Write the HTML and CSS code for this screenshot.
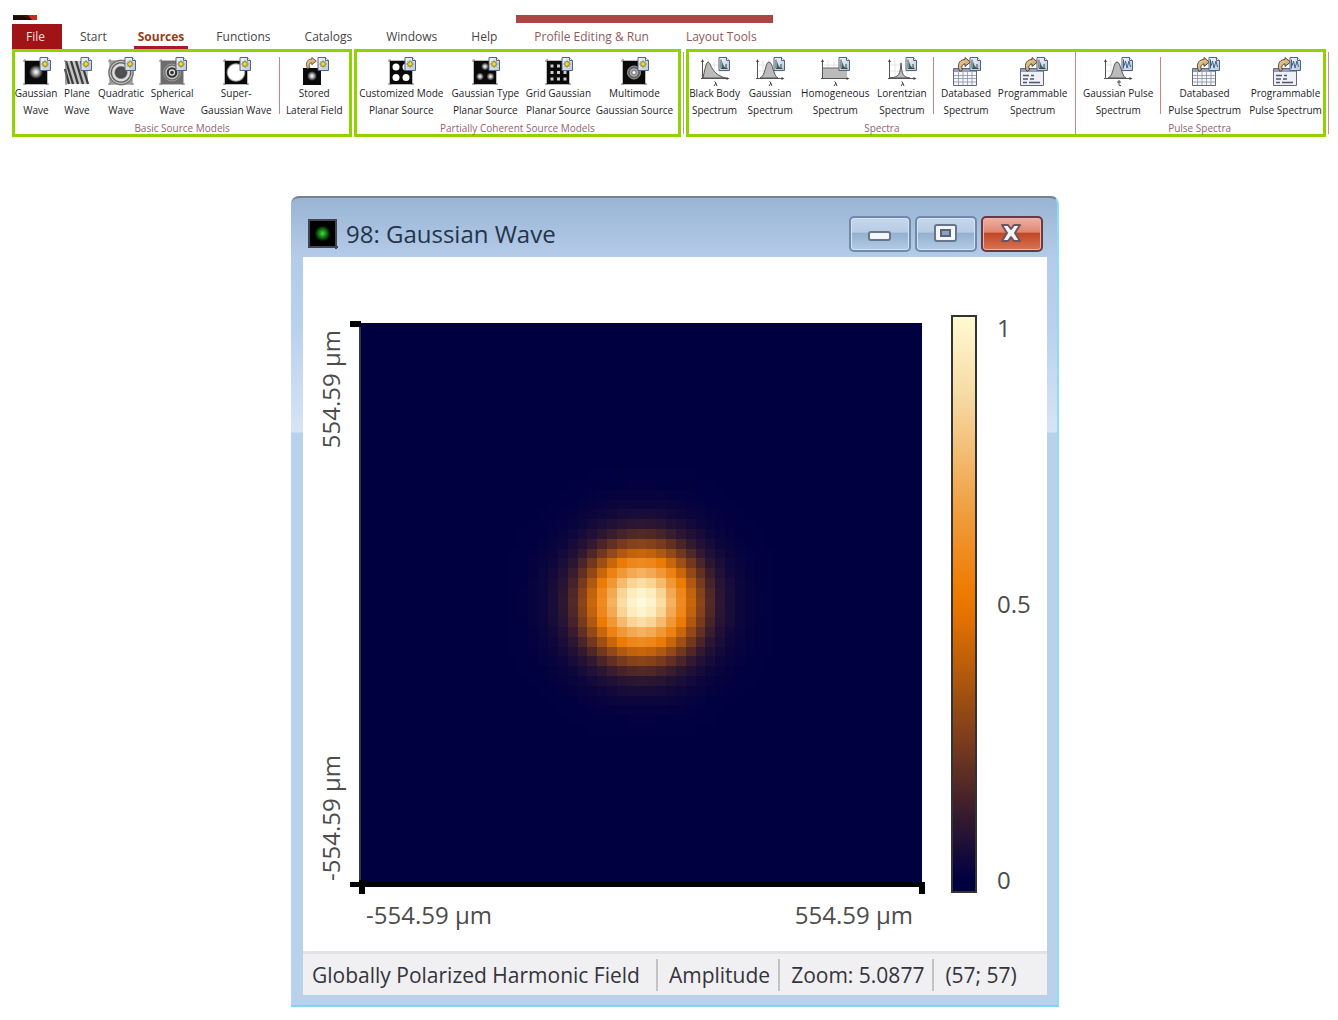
FILE: index.html
```html
<!DOCTYPE html>
<html lang="en">
<head>
<meta charset="utf-8">
<title>Gaussian Wave</title>
<link rel="stylesheet" href="styles.css">
</head>
<body>
<svg class="defs" aria-hidden="true">
  <defs>
    <radialGradient id="glow"><stop offset="0" stop-color="#fff"/><stop offset=".35" stop-color="#bbb"/><stop offset="1" stop-color="#0a0a0a"/></radialGradient>
    <radialGradient id="soft"><stop offset="0" stop-color="#fff"/><stop offset=".8" stop-color="#fff"/><stop offset="1" stop-color="#555"/></radialGradient>
    <radialGradient id="green"><stop offset="0" stop-color="#3be03b"/><stop offset=".35" stop-color="#1d981d"/><stop offset="1" stop-color="#000"/></radialGradient>
    <radialGradient id="rings"><stop offset="0" stop-color="#555"/><stop offset=".42" stop-color="#4a4a4a"/><stop offset=".54" stop-color="#ddd"/><stop offset=".64" stop-color="#ddd"/><stop offset=".74" stop-color="#555"/><stop offset=".84" stop-color="#ccc"/><stop offset=".92" stop-color="#666"/><stop offset="1" stop-color="#999"/></radialGradient>
    <linearGradient id="doc" x2="1" y2="1"><stop offset="0" stop-color="#f4f8fd"/><stop offset="1" stop-color="#b5c6de"/></linearGradient>
    <linearGradient id="gold" x2="1" y2="1"><stop offset="0" stop-color="#f0d8a8"/><stop offset="1" stop-color="#b98e52"/></linearGradient>
  </defs>
  <symbol id="page" viewBox="0 0 12 14"><path d="M1 .5h7.500l3 3v10H1z" fill="url(#doc)" stroke="#52637c"/><path d="M8.500.5v3h3" fill="#fff" stroke="#52637c"/></symbol>
  <symbol id="star" viewBox="0 0 12 14"><use href="#page"/><path d="M6 3.500v7M2.500 7h7M3.600 4.600l4.800 4.800M8.400 4.600L3.600 9.400" stroke="#6f6a30" stroke-width="1.200"/><circle cx="6" cy="7" r="2.200" fill="#f4dc2c" stroke="#8b7b22" stroke-width=".6"/></symbol>
  <symbol id="bars" viewBox="0 0 12 14"><use href="#page"/><path d="M3 2.500v9h6.500" fill="none" stroke="#444"/><path d="M4 11V4.500l1.500 4L7.500 11z" fill="#2f6d60"/><path d="M8 7v4" stroke="#444"/></symbol>
  <symbol id="pulse" viewBox="0 0 12 14"><use href="#page"/><path d="M2.500 2.500v9M3 9l1.500-5L6 11l2-7 1.500 6" fill="none" stroke="#3f6189"/></symbol>
  <symbol id="frame" viewBox="0 0 30 30"><path d="M2 4h26M4 2v26M26 4v24M2 27h26" stroke="#777" stroke-width="1"/></symbol>
  <symbol id="arrow" viewBox="0 0 14 16"><path d="M3 14.500C0 10 1 2.500 8 2.500V.5l5.500 4.500L8 9.500V7C5 7 4 10 5.500 13z" fill="url(#gold)" stroke="#4b3826" stroke-width=".9"/></symbol>
  <symbol id="i-gauss" viewBox="0 0 30 30"><use href="#frame"/><path d="M4 4h22v23H4z" fill="#0a0a0a"/><circle cx="15" cy="15" r="7" fill="url(#glow)"/><use href="#star" x="18" width="12" height="14"/></symbol>
  <symbol id="i-plane" viewBox="0 0 30 30"><path d="M3 4h23v23H3z" fill="#c4c4c4"/><path d="M3 12l4 15M4 4l7 23M9 4l7 23M14 4l7 23M19 4l7 23" stroke="#3c3c3c" stroke-width="2.300"/><path d="M2 4h2v24" fill="none" stroke="#777"/><use href="#star" x="18" width="12" height="14"/></symbol>
  <symbol id="i-quad" viewBox="0 0 30 30"><use href="#frame"/><path d="M4 4h22v23H4z" fill="#999"/><circle cx="15" cy="15.500" r="13" fill="url(#rings)"/><use href="#star" x="18" width="12" height="14"/></symbol>
  <symbol id="i-sphere" viewBox="0 0 30 30"><use href="#frame"/><path d="M4 4h22v23H4z" fill="#6d6d6d"/><g fill="none"><circle cx="15" cy="15.500" r="8.500" stroke="#999"/><circle cx="15" cy="15.500" r="6" fill="#333" stroke="#ccc" stroke-width="1.300"/><circle cx="15" cy="15.500" r="2.500" stroke="#ddd" stroke-width="1.300"/></g><use href="#star" x="18" width="12" height="14"/></symbol>
  <symbol id="i-super" viewBox="0 0 30 30"><use href="#frame"/><path d="M4 4h22v23H4z" fill="#0a0a0a"/><circle cx="15" cy="15.500" r="9.500" fill="url(#soft)"/><use href="#star" x="18" width="12" height="14"/></symbol>
  <symbol id="i-stored" viewBox="0 0 30 30"><path d="M4 11h18v17H4z" fill="#0a0a0a"/><circle cx="13" cy="19" r="5" fill="url(#glow)"/><use href="#arrow" x="5" width="14" height="13"/><use href="#star" x="18" width="12" height="14"/></symbol>
  <symbol id="i-custom" viewBox="0 0 30 30"><use href="#frame"/><path d="M4 4h22v23H4z" fill="#0a0a0a"/><g fill="#fff"><circle cx="10" cy="10" r="3.500"/><circle cx="20" cy="10" r="3.500"/><circle cx="10" cy="20.500" r="3.500"/><circle cx="20" cy="20.500" r="3.500"/></g><use href="#star" x="18" width="12" height="14"/></symbol>
  <symbol id="i-type" viewBox="0 0 30 30"><use href="#frame"/><path d="M4 4h22v23H4z" fill="#0a0a0a"/><g fill="url(#glow)"><circle cx="15" cy="9.500" r="4"/><circle cx="10" cy="19.500" r="4"/><circle cx="20.500" cy="19.500" r="4"/></g><use href="#star" x="18" width="12" height="14"/></symbol>
  <symbol id="i-grid" viewBox="0 0 30 30"><use href="#frame"/><path d="M4 4h22v23H4z" fill="#0a0a0a"/><path d="M7.500 9h16M7.500 15.500h16M7.500 22h16" stroke="#ccc" stroke-width="3" stroke-dasharray="3 3.500"/><use href="#star" x="18" width="12" height="14"/></symbol>
  <symbol id="i-multi" viewBox="0 0 30 30"><use href="#frame"/><path d="M4 4h22v23H4z" fill="#0a0a0a"/><circle cx="15" cy="15.500" r="6.500" fill="#666" stroke="#999"/><circle cx="15" cy="15.500" r="3.700" fill="#888" stroke="#bbb"/><circle cx="15" cy="15.500" r="1.500" fill="#fff"/><use href="#star" x="18" width="12" height="14"/></symbol>
  <symbol id="axes" viewBox="0 0 30 30"><path d="M2 8h26M2 14h26M8 3v18M14 3v18M20 3v18" stroke="#ddd" stroke-width=".8"/><path d="M2.500 4v18M1 21.500h26" stroke="#555"/><path d="M2.500 2L1 5h3zM29.500 21.500l-3-1.500v3z" fill="#444"/></symbol>
  <symbol id="lambda" viewBox="0 0 30 30"><path d="M14.500 24.500q1 0 1.500 2l1 2.500M16 26l-2 3" fill="none" stroke="#444"/></symbol>
  <symbol id="i-black" viewBox="0 0 30 30"><use href="#axes"/><path d="M3 21Q6 5 8 5c3 0 3 13 18 16z" fill="#bbb" stroke="#555"/><use href="#lambda"/><use href="#bars" x="18" width="12" height="14"/></symbol>
  <symbol id="i-bell" viewBox="0 0 30 30"><use href="#axes"/><path d="M5 21C11 19 10 5 14 5s4 14 9 16z" fill="#bbb" stroke="#555"/><use href="#lambda"/><use href="#bars" x="18" width="12" height="14"/></symbol>
  <symbol id="i-homo" viewBox="0 0 30 30"><use href="#axes"/><path d="M3 11h24v10H3z" fill="#bbb"/><path d="M3 11h24" stroke="#666"/><use href="#lambda"/><use href="#bars" x="18" width="12" height="14"/></symbol>
  <symbol id="i-lorentz" viewBox="0 0 30 30"><use href="#axes"/><path d="M3 21c9-1 10-3 11-15 1 12 2 14 9 15z" fill="#bbb" stroke="#555"/><use href="#lambda"/><use href="#bars" x="18" width="12" height="14"/></symbol>
  <symbol id="table" viewBox="0 0 30 30"><path d="M2.500 11.500h23v17h-23z" fill="#f5f7fb" stroke="#667"/><path d="M3 12h22v3H3z" fill="#8fa0c0"/><path d="M3 18.500h22M3 21.500h22M3 25h22M7.500 15v13M12 15v13M16.500 15v13M21 15v13" stroke="#8b90a0" stroke-width=".8"/><use href="#arrow" x="6" width="14" height="16"/></symbol>
  <symbol id="prog" viewBox="0 0 30 30"><path d="M2.500 11.500h23v17h-23z" fill="#eef1f7" stroke="#667"/><path d="M3 12h22v3H3z" fill="#8fa0c0"/><path d="M5 18.500h6M13 18.500h3M5 22h5M12 22h4M5 25.500h4M11 25.500h11" stroke="#556" stroke-width="1.300"/><use href="#arrow" x="6" width="14" height="16"/></symbol>
  <symbol id="i-data" viewBox="0 0 30 30"><use href="#table"/><use href="#bars" x="18" width="12" height="14"/></symbol>
  <symbol id="i-prog" viewBox="0 0 30 30"><use href="#prog"/><use href="#bars" x="18" width="12" height="14"/></symbol>
  <symbol id="i-pbell" viewBox="0 0 30 30"><use href="#axes"/><path d="M5 21C11 19 10 5 14 5s4 14 9 16z" fill="#bbb" stroke="#555"/><path d="M16 23v5q0 1 2 .5M14 25h4" fill="none" stroke="#444"/><use href="#pulse" x="18" width="12" height="14"/></symbol>
  <symbol id="i-pdata" viewBox="0 0 30 30"><use href="#table"/><use href="#pulse" x="18" width="12" height="14"/></symbol>
  <symbol id="i-pprog" viewBox="0 0 30 30"><use href="#prog"/><use href="#pulse" x="18" width="12" height="14"/></symbol>
</svg>

<header class="app">
  <div class="caption">
    <svg class="logo" viewBox="0 0 24 5" aria-hidden="true"><path d="M0 0h24v5H0z" fill="#4a0f08"/><path d="M0 1h10l8 4H0z" fill="#1d0d06"/><path d="M15 0h9v5h-5z" fill="#c92a1c"/></svg>
    <div class="context"></div>
  </div>
  <nav class="tabs">
    <a class="file" href="#file">File</a>
    <a href="#start">Start</a>
    <a class="active" href="#sources">Sources</a>
    <a href="#functions">Functions</a>
    <a href="#catalogs">Catalogs</a>
    <a href="#windows">Windows</a>
    <a href="#help">Help</a>
    <a class="tool" href="#profile">Profile Editing &amp; Run</a>
    <a class="tool" href="#layout">Layout Tools</a>
  </nav>
  <div class="ribbon">
    <div class="box first">
      <section class="group">
        <div class="tools basic">
          <button><svg><use href="#i-gauss"/></svg><span>Gaussian<br>Wave</span></button>
          <button><svg><use href="#i-plane"/></svg><span>Plane<br>Wave</span></button>
          <button><svg><use href="#i-quad"/></svg><span>Quadratic<br>Wave</span></button>
          <button><svg><use href="#i-sphere"/></svg><span>Spherical<br>Wave</span></button>
          <button><svg><use href="#i-super"/></svg><span>Super-<br>Gaussian Wave</span></button>
          <i class="rule"></i>
          <button><svg><use href="#i-stored"/></svg><span>Stored<br>Lateral Field</span></button>
        </div>
        <h2>Basic Source Models</h2>
      </section>
    </div>
    <div class="box second">
      <section class="group">
        <div class="tools coherent">
          <button><svg><use href="#i-custom"/></svg><span>Customized Mode<br>Planar Source</span></button>
          <button><svg><use href="#i-type"/></svg><span>Gaussian Type<br>Planar Source</span></button>
          <button><svg><use href="#i-grid"/></svg><span>Grid Gaussian<br>Planar Source</span></button>
          <button><svg><use href="#i-multi"/></svg><span>Multimode<br>Gaussian Source</span></button>
        </div>
        <h2>Partially Coherent Source Models</h2>
      </section>
    </div>
    <i class="edge"></i>
    <div class="box third">
      <section class="group spectra-group">
        <div class="tools spectra">
          <button><svg><use href="#i-black"/></svg><span>Black Body<br>Spectrum</span></button>
          <button><svg><use href="#i-bell"/></svg><span>Gaussian<br>Spectrum</span></button>
          <button><svg><use href="#i-homo"/></svg><span>Homogeneous<br>Spectrum</span></button>
          <button><svg><use href="#i-lorentz"/></svg><span>Lorentzian<br>Spectrum</span></button>
          <i class="rule"></i>
          <button><svg><use href="#i-data"/></svg><span>Databased<br>Spectrum</span></button>
          <button><svg><use href="#i-prog"/></svg><span>Programmable<br>Spectrum</span></button>
        </div>
        <h2>Spectra</h2>
      </section>
      <section class="group pulse-group">
        <div class="tools pulses">
          <button><svg><use href="#i-pbell"/></svg><span>Gaussian Pulse<br>Spectrum</span></button>
          <i class="rule"></i>
          <button><svg><use href="#i-pdata"/></svg><span>Databased<br>Pulse Spectrum</span></button>
          <button><svg><use href="#i-pprog"/></svg><span>Programmable<br>Pulse Spectrum</span></button>
        </div>
        <h2>Pulse Spectra</h2>
      </section>
    </div>
    <i class="edge"></i>
  </div>
</header>

<main>
  <article class="window">
    <div class="titlebar">
      <svg class="wicon" viewBox="0 0 32 32" aria-hidden="true"><path d="M1 2h29M2 1v29M1 29h30M29 2v29" stroke="#445" stroke-width="2"/><path d="M3 3h25v25H3z"/><circle cx="15.500" cy="15.500" r="8" fill="url(#green)"/></svg>
      <h1>98: Gaussian Wave</h1>
      <button class="ctl" aria-label="Minimize"><svg viewBox="0 0 58 32"><rect x="18" y="14" width="21" height="8" rx="2" fill="#f4f6f9" stroke="#67768c" stroke-width="2"/></svg></button>
      <button class="ctl" aria-label="Maximize"><svg viewBox="0 0 58 32"><rect x="18" y="7" width="21" height="16" rx="2" fill="#f4f6f9" stroke="#67768c" stroke-width="2"/><rect x="24" y="12" width="9" height="6" fill="#8ba0bd" stroke="#56657c" stroke-width="2"/></svg></button>
      <button class="ctl close" aria-label="Close"><svg viewBox="0 0 58 32"><path d="M19 7h6l3 4 3-4h6l-5 8 5 8h-6l-3-4-3 4h-6l5-8z" fill="#f4f4f4" stroke="#6b5560" stroke-width="2" stroke-linejoin="round"/></svg></button>
    </div>
    <div class="view">
      <div class="ylabels"><span>554.59 µm</span><span>-554.59 µm</span></div>
      <div class="plot">
        <canvas id="field" width="57" height="57"></canvas>
        <i class="tick top"></i><i class="tick left"></i><i class="tick start"></i><i class="tick end"></i>
      </div>
      <div class="scale"></div>
      <div class="values"><span>1</span><span>0.5</span><span>0</span></div>
      <div class="xlabels"><span>-554.59 µm</span><span>554.59 µm</span></div>
    </div>
    <footer class="status">
      <span>Globally Polarized Harmonic Field</span>
      <span>Amplitude</span>
      <span>Zoom: 5.0877</span>
      <span>(57; 57)</span>
    </footer>
  </article>
</main>
<script src="field.js"></script>
</body>
</html>
```
FILE: styles.css
```css
* { box-sizing: border-box; }
body { margin: 0; background: #fff; color: #333; font-family: "Open Sans", "Noto Sans", sans-serif; }
h1, h2 { margin: 0; font-weight: 400; }
button { padding: 0; border: 0; background: none; color: inherit; font: inherit; }
.defs { position: absolute; width: 0; height: 0; }

.app { padding: 15px 9px 0 12px; }
.caption { display: grid; grid-template-columns: 504fr 257fr 556fr; height: 9px; }
.logo { width: 24px; height: 5px; margin-left: 1px; }
.context { height: 8px; background: #ae4545; }

.tabs { display: flex; height: 25px; font-size: 12px; line-height: 25px; }
.tabs a { color: #444; text-decoration: none; white-space: nowrap; margin-right: 34px; }
.tabs .file { width: 50px; margin-right: 18px; padding-right: 3px; background: #a01418; color: #f3dcdc; text-align: center; }
.tabs .active { color: #963d12; font-weight: 700; border-bottom: 3px solid #a8192b; padding: 0 4px; margin: 0 28px 0 -7px; }
.tabs .tool { color: #905a5a; margin: 0 34px 0 3px; }

.ribbon { display: flex; font-size: 10px; font-weight: 500; line-height: 17px; color: #1c1c26; }
.box { display: flex; border: 3px solid #8fd400; height: 88px; min-width: 0; }
.first { flex: 340 340 340px; }
.second { flex: 326 326 326px; margin-left: 2px; }
.third { flex: 640 640 640px; margin-left: 2px; }
.edge { width: 1px; margin: 3px 0 3px 2px; background: #cf8f8f; }
.group { flex: 1; min-width: 0; display: flex; flex-direction: column; }
.spectra-group { flex: 387; border-right: 1px solid #cf8484; }
.pulse-group { flex: 247; }
.tools { display: grid; height: 71px; padding-top: 5px; }
.basic { grid-template-columns: 42fr 40fr 48fr 54fr 74fr 12fr 58fr 6fr; }
.coherent { grid-template-columns: 88fr 80fr 66fr 86fr; }
.spectra { grid-template-columns: 52fr 59fr 71fr 62fr 2fr 62fr 71fr 7fr; }
.pulses { grid-template-columns: 84fr 1fr 87fr 75fr; }
.tools button { display: flex; flex-direction: column; align-items: center; min-width: 0; height: 64px; white-space: nowrap; }
.tools svg { width: 30px; height: 30px; flex: none; }
.tools span { margin-top: -2px; }
.rule { width: 1px; height: 57px; background: #c98383; justify-self: center; }
.group h2 { color: #99606a; font-size: 10px; line-height: 14px; text-align: center; }

main { padding: 59px 0 0 12px; }
.window { max-width: 768px; margin: 0 auto; padding: 0 10px 10px 12px; border-top: 2px solid #77818f; border-right: 2px solid #8fdcf5; border-bottom: 2px solid #7fd5f3; border-radius: 8px 8px 0 0; background: linear-gradient(#9ab4d4 0, #b4cce9 60px, #b9d1ed 130px, #d6e4f6 234px, #b9d1eb 235px); }
.titlebar { display: flex; align-items: center; height: 59px; gap: 4px; padding: 12px 4px 0; color: #24344c; }
.wicon { width: 32px; height: 32px; }
.titlebar h1 { flex: 1; font-size: 24px; line-height: 32px; margin-left: 3px; }
.ctl { width: 62px; height: 36px; border: 2px solid #7189aa; border-radius: 5px; background: linear-gradient(#c6d8ec, #b7cbe3 45%, #93afcf 46%, #b2cbe8); box-shadow: inset 0 0 0 1px #d5e2f1; }
.ctl svg { display: block; width: 100%; }
.close { border-color: #693a45; background: linear-gradient(#eeb0a4, #df8670 45%, #bf4522 46%, #d97455); box-shadow: inset 0 0 0 1px #efb4a6; }

.view { display: grid; grid-template-columns: 56px 563fr 29px 26px 70fr; align-content: start; padding-top: 66px; height: 694px; background: #fff; font-size: 24px; line-height: 30px; color: #4c4c4c; }
.plot { position: relative; border-bottom: 5px solid #000; border-left: 2px solid #334; height: 564px; align-self: start; }
#field { display: block; width: 100%; height: 559px; image-rendering: pixelated; background: #000040; }
.tick { position: absolute; background: #000; }
.top { left: -11px; top: -2px; width: 11px; height: 6px; }
.left { left: -11px; bottom: -5px; width: 11px; height: 5px; }
.start { left: -2px; bottom: -12px; width: 6px; height: 14px; }
.end { right: -3px; bottom: -12px; width: 6px; height: 12px; }
.ylabels { display: flex; flex-direction: column; justify-content: space-between; align-items: center; height: 558px; padding-top: 7px; }
.ylabels span { writing-mode: vertical-rl; transform: rotate(180deg); }
.scale { grid-column: 4; height: 578px; margin: -8px 0; border: 2px solid #333; background: linear-gradient(#fffad2, #f5d79e 15%, #f0a044 33%, #ee7a00 48%, #e07000 53%, #7a3c1c 74%, #301830 88%, #000040 98%); }
.values { display: flex; flex-direction: column; justify-content: space-between; height: 582px; margin: -10px 0; padding-left: 20px; }
.xlabels { grid-column: 2; display: flex; justify-content: space-between; padding: 13px 9px 0 7px; }

.status { display: flex; align-items: center; height: 44px; border-top: 3px solid #e4e3e4; background: #f0eff1; font-size: 21px; font-weight: 500; line-height: 32px; color: #34343c; white-space: nowrap; padding-left: 9px; }
.status span { padding-right: 8px; margin-right: 11px; border-right: 2px solid #c3c3c5; }
.status span:first-child { padding-right: 16px; }
.status span:last-child { border: 0; }
```
FILE: field.js
```js
// Paints the amplitude of a Gaussian beam, one canvas pixel per sample.
const stops = [
  [0, [0, 0, 64]],
  [0.12, [48, 24, 48]],
  [0.26, [122, 60, 28]],
  [0.5, [236, 122, 4]],
  [0.68, [242, 160, 68]],
  [0.88, [252, 224, 168]],
  [1, [255, 251, 218]]
];
const colour = v => {
  let i = 1;
  while (stops[i][0] < v) i++;
  const [a, from] = stops[i - 1];
  const [b, to] = stops[i];
  return from.map((c, k) => c + (to[k] - c) * (v - a) / (b - a));
};
const canvas = document.getElementById('field');
const context = canvas.getContext('2d');
const size = canvas.width;
const waist = 5.4;
for (let y = 0; y < size; y++) {
  for (let x = 0; x < size; x++) {
    const r2 = (x - 28) ** 2 + (y - 28) ** 2;
    context.fillStyle = `rgb(${colour(Math.exp(-r2 / waist ** 2)).map(Math.round).join(',')})`;
    context.fillRect(x, y, 1, 1);
  }
}
```
